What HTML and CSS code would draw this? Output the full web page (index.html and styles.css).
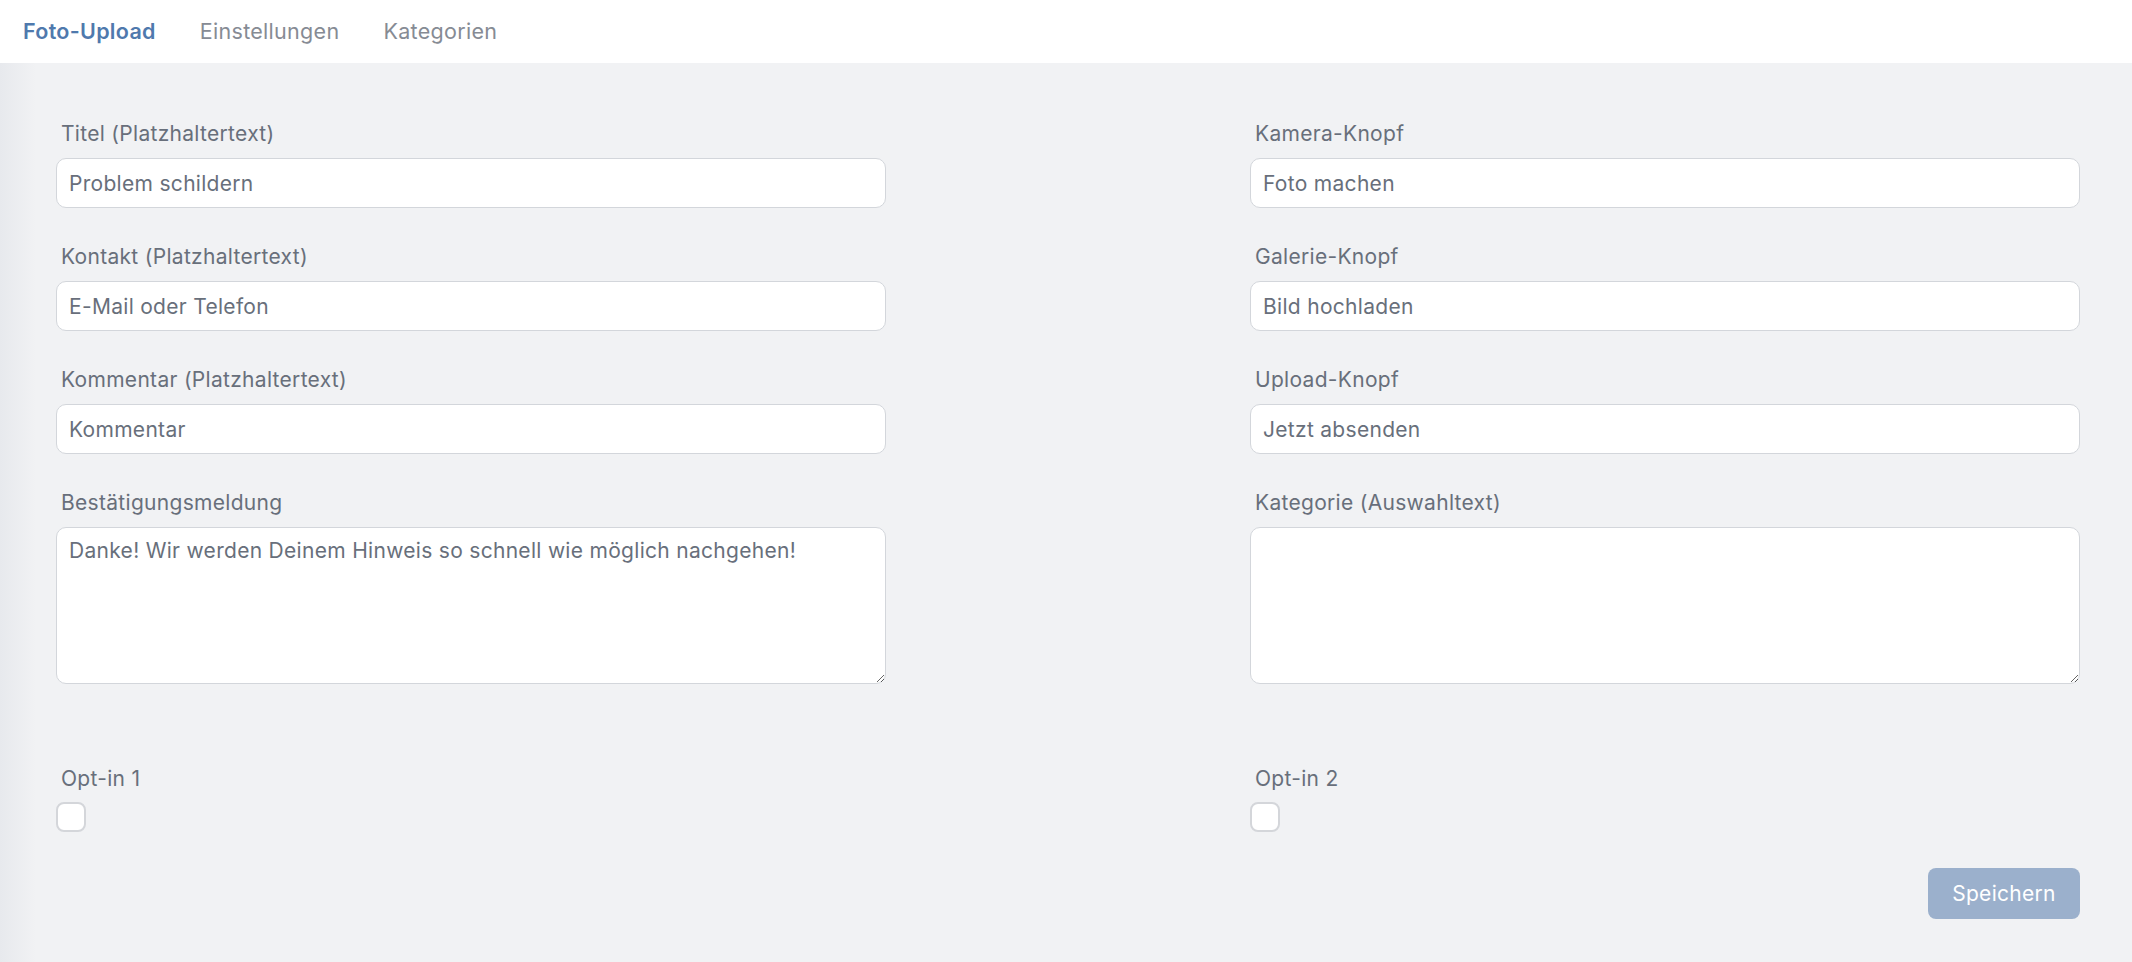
FILE: index.html
```html
<!DOCTYPE html>
<html lang="de">
<head>
  <meta charset="UTF-8">
  <meta name="viewport" content="width=device-width, initial-scale=1.0">
  <title>Foto-Upload</title>
  <link rel="stylesheet" href="styles.css">
</head>
<body>

<nav class="tabs">
  <a href="#" class="tab active">Foto-Upload</a>
  <a href="#" class="tab">Einstellungen</a>
  <a href="#" class="tab">Kategorien</a>
</nav>

<main class="page">
  <form class="settings-form">
    <div class="form-grid">
      <!-- Texte links / rechts -->
      <div class="field">
        <label for="title">Titel (Platzhaltertext)</label>
        <input type="text" id="title" value="Problem schildern">
      </div>
      <div class="field">
        <label for="camera">Kamera-Knopf</label>
        <input type="text" id="camera" value="Foto machen">
      </div>

      <div class="field">
        <label for="contact">Kontakt (Platzhaltertext)</label>
        <input type="text" id="contact" value="E-Mail oder Telefon">
      </div>
      <div class="field">
        <label for="gallery">Galerie-Knopf</label>
        <input type="text" id="gallery" value="Bild hochladen">
      </div>

      <div class="field">
        <label for="comment">Kommentar (Platzhaltertext)</label>
        <input type="text" id="comment" value="Kommentar">
      </div>
      <div class="field">
        <label for="upload">Upload-Knopf</label>
        <input type="text" id="upload" value="Jetzt absenden">
      </div>

      <div class="field">
        <label for="confirm">Bestätigungsmeldung</label>
        <textarea id="confirm">Danke! Wir werden Deinem Hinweis so schnell wie möglich nachgehen!</textarea>
      </div>
      <div class="field">
        <label for="category">Kategorie (Auswahltext)</label>
        <textarea id="category"></textarea>
      </div>

      <!-- Opt-ins -->
      <div class="field optin">
        <label for="optin1">Opt-in 1</label>
        <input type="checkbox" id="optin1">
      </div>
      <div class="field optin">
        <label for="optin2">Opt-in 2</label>
        <input type="checkbox" id="optin2">
      </div>
    </div>

    <div class="actions">
      <button type="button" class="btn-save" disabled>Speichern</button>
    </div>
  </form>
</main>

</body>
</html>
```

FILE: styles.css
```css
/* General Styles */
html, body {
  height: 100%;
}
body {
  margin: 0;
  font-family: Inter, "Noto Sans", Arial, sans-serif;
  font-size: 21px;
  letter-spacing: 0.3px;
  background: #f1f2f4;
  color: #686f7b;
  display: flex;
  flex-direction: column;
}

/* Tab bar */
.tabs {
  display: flex;
  gap: 44px;
  height: 63px;
  align-items: center;
  padding: 0 23px 2px;
  background: #fff;
  box-sizing: border-box;
}
.tab {
  font-size: 21.5px;
  color: #868b94;
  text-decoration: none;
}
.tab.active {
  color: #4f79ad;
  font-weight: 600;
}

/* Content */
.page {
  flex: 1;
  padding: 59px 52px 0 56px;
  background: linear-gradient(to right, #e7e9ed, #f1f2f4 36px);
}
.form-grid {
  display: grid;
  grid-template-columns: 1fr 1fr;
  column-gap: 364px;
  row-gap: 37px;
}
.field label {
  display: block;
  line-height: 24px;
  margin: 0 0 12px 5px;
}
.field input[type="text"],
.field textarea {
  display: block;
  width: 100%;
  box-sizing: border-box;
  font-family: inherit;
  font-size: 21px;
  letter-spacing: 0.3px;
  color: #686f7b;
  background: #fff;
  border: 1px solid #d3d6db;
  border-radius: 10px;
  padding: 0 12px;
  outline: none;
}
.field input[type="text"] {
  height: 50px;
}
.field textarea {
  height: 157px;
  padding: 11px 12px;
  line-height: 24px;
  resize: vertical;
}

.field.optin {
  margin-top: 46px;
}
.field.optin label {
  margin-bottom: 11px;
}
.field input[type="checkbox"] {
  appearance: none;
  -webkit-appearance: none;
  display: block;
  margin: 0;
  width: 30px;
  height: 30px;
  background: #fff;
  border: 2px solid #d4d6da;
  border-radius: 8px;
}

.actions {
  display: flex;
  justify-content: flex-end;
  margin-top: 36px;
}
.btn-save {
  width: 152px;
  height: 51px;
  border: none;
  border-radius: 8px;
  background: #9bb0cc;
  color: #fff;
  font-family: inherit;
  font-size: 21px;
  letter-spacing: 0.3px;
}
```
